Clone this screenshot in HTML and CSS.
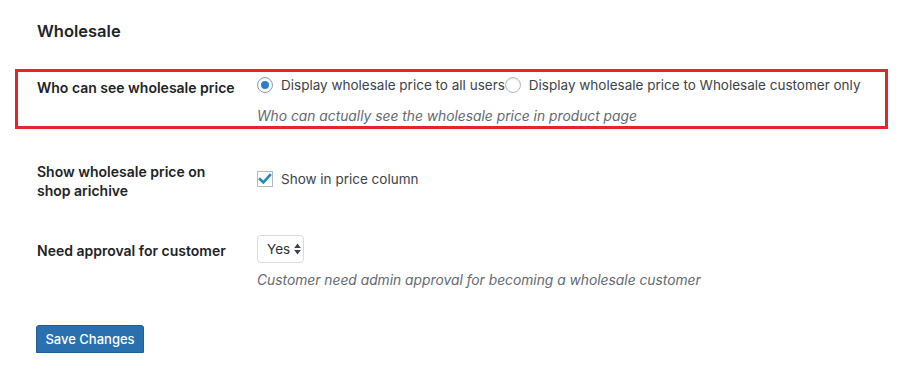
FILE: index.html
```html
<!DOCTYPE html>
<html lang="en">
<head>
    <meta charset="UTF-8">
    <meta name="viewport" content="width=device-width, initial-scale=1.0">
    <title>Wholesale Settings</title>
    <link rel="stylesheet" href="styles.css">
</head>
<body>
    <div class="page">
        <h2 class="title">Wholesale</h2>

        <div class="row row-highlight">
            <div class="row-label">Who can see wholesale price</div>
            <div class="row-field">
                <div class="radios">
                    <label class="radio-option">
                        <span class="radio checked"></span>
                        Display wholesale price to all users
                    </label>
                    <label class="radio-option">
                        <span class="radio"></span>
                        Display wholesale price to Wholesale customer only
                    </label>
                </div>
                <p class="description">Who can actually see the wholesale price in product page</p>
            </div>
        </div>

        <div class="row row-archive">
            <div class="row-label">Show wholesale price on shop arichive</div>
            <div class="row-field">
                <label class="check-option">
                    <span class="checkbox">
                        <svg width="14" height="14" viewBox="0 0 14 14">
                            <path d="M2 7.2 L5.4 10.4 L12 3" fill="none" stroke="#1e8cbe" stroke-width="2.6" stroke-linecap="square"/>
                        </svg>
                    </span>
                    Show in price column
                </label>
            </div>
        </div>

        <div class="row row-approval">
            <div class="row-label">Need approval for customer</div>
            <div class="row-field">
                <div class="select">
                    Yes
                    <svg width="7" height="12" viewBox="0 0 7 12">
                        <path d="M3.5 0.5 L6.8 5 L0.2 5 Z M3.5 11.5 L6.8 7 L0.2 7 Z" fill="#3c434a"/>
                    </svg>
                </div>
                <p class="description">Customer need admin approval for becoming a wholesale customer</p>
            </div>
        </div>

        <button class="btn-primary">Save Changes</button>
    </div>
</body>
</html>
```

FILE: styles.css
```css
* {
    box-sizing: border-box;
    margin: 0;
    padding: 0;
}

body {
    background: #ffffff;
    font-family: "Inter", "Liberation Sans", sans-serif;
    font-size: 13.5px;
    color: #3c434a;
}

.page {
    padding: 21px 15px 0 15px;
}

.title {
    font-size: 16.5px;
    font-weight: 600;
    color: #1d2327;
    line-height: 20px;
    padding-left: 22px;
}

.row {
    display: flex;
    padding-left: 22px;
}

.row-label {
    width: 220px;
    flex-shrink: 0;
    padding-right: 18px;
    font-size: 14px;
    font-weight: 600;
    color: #1d2327;
    line-height: 19px;
}

.row-field {
    flex: 1;
}

/* highlighted row */
.row-highlight {
    margin-top: 28px;
    width: 873px;
    height: 60px;
    border: 3px solid #e5242b;
    padding-left: 19px;
    padding-top: 3px;
}

.row-highlight .row-label {
    padding-top: 3px;
}

.radios {
    display: flex;
    line-height: 20px;
}

.radio-option {
    display: flex;
    align-items: center;
    gap: 8px;
}

.radio {
    width: 16px;
    height: 16px;
    border: 1px solid #8c9fb8;
    border-radius: 50%;
    display: flex;
    align-items: center;
    justify-content: center;
    box-shadow: inset 0 1px 2px rgba(0, 0, 0, 0.1);
}

.radio.checked::after {
    content: "";
    width: 8px;
    height: 8px;
    border-radius: 50%;
    background: #2c7fc6;
}

.radio-option + .radio-option .radio {
    border-color: #b4b9be;
}

.description {
    font-size: 13.8px;
    font-style: italic;
    color: #646970;
    line-height: 20px;
    margin-top: 11px;
}

/* checkbox row */
.row-archive {
    margin-top: 33px;
}

.check-option {
    display: flex;
    align-items: center;
    gap: 8px;
    padding-top: 7px;
    line-height: 20px;
}

.checkbox {
    width: 16px;
    height: 16px;
    border: 1px solid #b4b9be;
    display: flex;
    align-items: center;
    justify-content: center;
}

/* select row */
.row-approval {
    margin-top: 35px;
}

.row-approval .row-label {
    padding-top: 6px;
}

.select {
    display: inline-flex;
    align-items: center;
    gap: 4px;
    height: 28px;
    width: 47px;
    padding-left: 9px;
    border: 1px solid #dcdcde;
    border-radius: 4px;
    color: #2c3338;
    line-height: 20px;
}

.row-approval .description {
    margin-top: 7px;
}

.btn-primary {
    margin: 35px 0 0 21px;
    width: 108px;
    height: 28px;
    background: #2a70ae;
    border: 1px solid #1f5f99;
    border-radius: 3px;
    color: #ffffff;
    font-family: "Inter", "Liberation Sans", sans-serif;
    font-size: 13px;
    font-weight: 500;
    box-shadow: 0 1px 0 #1d5a91;
}
```
